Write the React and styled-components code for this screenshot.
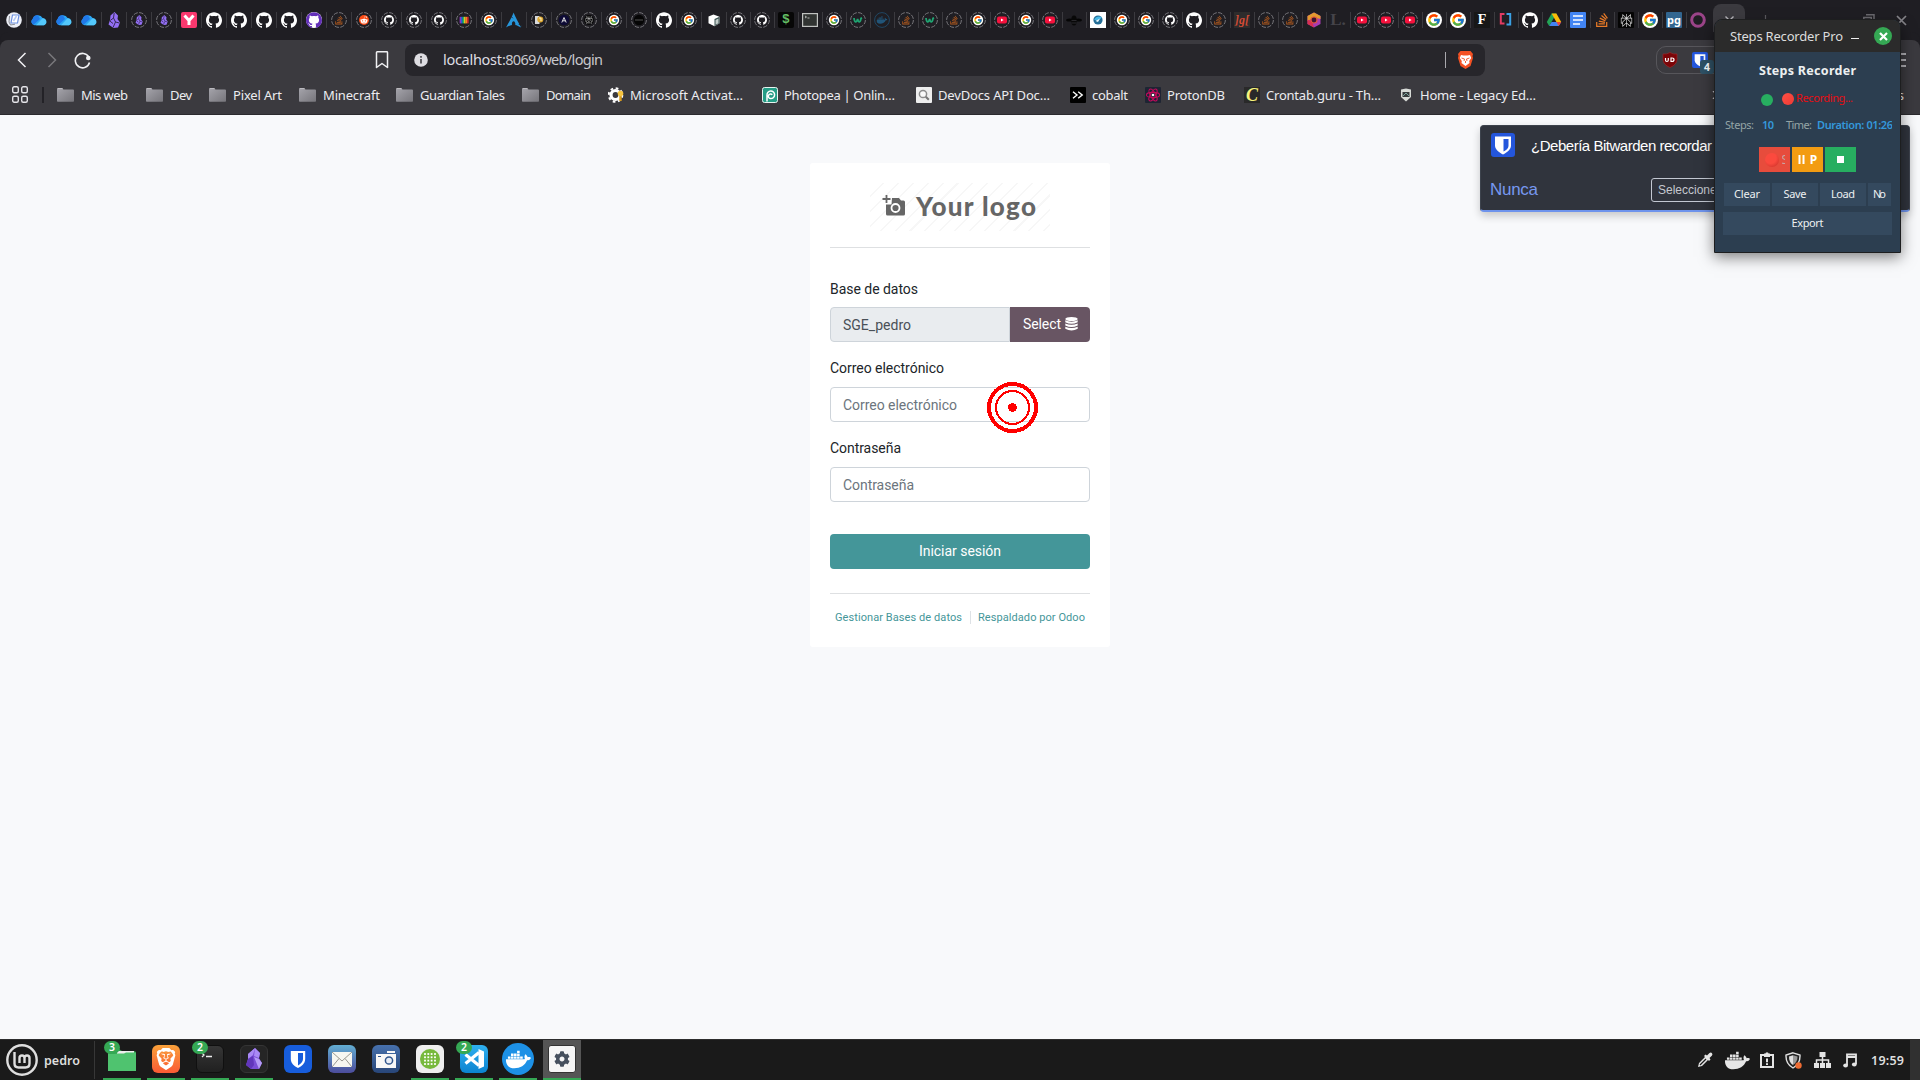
import React, { useLayoutEffect, useRef, useState } from "react";
import styled, { createGlobalStyle, css } from "styled-components";
import { SiBrave, SiGithub, SiArchlinux, SiPerplexity } from "react-icons/si";
import { FaStackOverflow, FaRedditAlien, FaDocker, FaCog } from "react-icons/fa";
import { FcGoogle } from "react-icons/fc";

const ui = `"Noto Sans", "Open Sans", sans-serif`;

const GlobalStyle = createGlobalStyle`
  * { box-sizing: border-box; }
  html, body { margin: 0; padding: 0; overflow: hidden; }
  svg { display: block; flex: none; }
`;

/* ---------- text whose tracking adapts to a column width ---------- */
const FitSpan = styled.span`
  display: block;
  flex: none;
  white-space: pre;
`;

function Fit({ w, children }) {
  const ref = useRef(null);
  const [tracking, setTracking] = useState(0);
  useLayoutEffect(() => {
    const range = document.createRange();
    range.selectNodeContents(ref.current);
    const natural = range.getBoundingClientRect().width;
    setTracking((w - natural) / (String(children).length - 1));
  }, [w, children]);
  return (
    <FitSpan ref={ref} style={{ width: w, letterSpacing: tracking }}>
      {children}
    </FitSpan>
  );
}

/* ---------- desktop ---------- */
const Desktop = styled.div`
  position: relative;
  display: flex;
  flex-direction: column;
  width: 1920px;
  height: 1080px;
  overflow: hidden;
  background: #f8f9fb;
  font-family: ${ui};
`;

/* ---------- tab strip ---------- */
const TabStrip = styled.div`
  display: flex;
  align-items: center;
  height: 40px;
  padding-left: 2px;
  background: #1f1e23;
`;

const Tab = styled.div`
  flex: none;
  width: ${(p) => (p.$wide ? 25 : 24)}px;
  height: 16px;
  padding-left: ${(p) => (p.$wide ? 4 : 3)}px;
  border-right: 1px solid ${(p) => (p.$last ? "transparent" : "#3b3a3f")};
`;

const TabIcon = styled.div`
  display: flex;
  align-items: center;
  justify-content: center;
  width: 16px;
  height: 16px;
  border-radius: ${(p) => p.$r || 0};
  background: ${(p) => p.$bg || "transparent"};
  color: ${(p) => p.$c || "#fff"};
  font: bold ${(p) => p.$fs || 10}px/16px ${(p) => p.$ff || ui};
`;

const ActiveTab = styled.div`
  flex: none;
  display: flex;
  align-items: center;
  justify-content: center;
  width: 32px;
  height: 36px;
  margin: 4px 0 0 2px;
  padding-bottom: 4px;
  border-radius: 8px;
  background: #3b3a3f;
`;

const WindowControls = styled.div`
  display: flex;
  align-items: center;
  margin-left: 15px;
  gap: 92px;
`;

const ControlPair = styled.div`
  display: flex;
  align-items: center;
  gap: 21px;
`;

const Ring = ({ children }) => (
  <svg width="16" height="16" viewBox="0 0 16 16">
    <circle cx="8" cy="8" r="7.4" fill="none" stroke="#77767b" strokeWidth="1" strokeDasharray="4.4 1.4" />
    {children}
  </svg>
);

const Sub = ({ icon: Icon, color, size = 10 }) => <Icon x={8 - size / 2} y={8 - size / 2} size={size} color={color} />;

const Cloud = () => (
  <svg width="16" height="16" viewBox="0 0 16 16">
    <path d="M3.5 13.2A3.5 3.5 0 0 1 2 6.8 5.2 5.2 0 0 1 11.6 6 4 4 0 0 1 13 13.2z" fill="#2aa6f4" />
    <path d="M5 13.2 11.6 6.2A3.6 3.6 0 0 1 13 13.2z" fill="#53c8fb" />
    <path d="M1.5 7.2A5 5 0 0 1 7 3.2L9 7 2.6 12.8A3.4 3.4 0 0 1 1.5 7.2z" fill="#2179e8" />
  </svg>
);

const ObsidianMark = ({ s = 16, o = 0 }) => (
  <g transform={`translate(${o} ${o}) scale(${s / 16})`}>
    <path d="M8.5 0 12 3.5 11.5 7 14 10.5 12 15.5 7.5 16 2.5 12.5 4 8 4.5 3.5z" fill="#9470f5" />
    <path d="M8.2 1 7.5 6 4.2 8.5M7.5 6 9.5 10 7 15.5M9.5 10 13.5 11M4 9.2 7 11.5" stroke="#2b2143" strokeWidth=".9" fill="none" />
  </g>
);

const Youtube = () => (
  <>
    <rect x="3" y="4.6" width="10" height="7" rx="2" fill="#f5123d" />
    <path d="M7 6.6 9.6 8.1 7 9.6z" fill="#fff" />
  </>
);

const Bars = () => (
  <>
    {["#8c2fc0", "#2767e8", "#1fbf58", "#f4d128", "#f28424", "#e02c2c"].map((c, i) => (
      <rect key={c} x={3.6 + i * 1.5} y="4.8" width="1.5" height="6.6" fill={c} />
    ))}
  </>
);

const glyphs = {
  doc: () => (
    <svg width="16" height="16" viewBox="0 0 16 16">
      <circle cx="8" cy="8" r="7.8" fill="#eceef5" />
      <path d="M6.5 3H13l-1.5 8H5z" fill="#fff" stroke="#6b8fe0" strokeWidth="1.2" />
      <path d="M3.5 4 3 10l1.5 3 4.5-.8" stroke="#70747e" fill="none" strokeWidth=".8" />
      <path d="m7.5 9 3-5" stroke="#b5c8f4" strokeWidth="1.5" />
    </svg>
  ),
  cloud: Cloud,
  obs: () => <svg width="16" height="16" viewBox="0 0 16 16"><ObsidianMark /></svg>,
  obsR: () => <Ring><ObsidianMark s={10} o={3} /></Ring>,
  y: () => (
    <TabIcon $bg="#f9386e" $r="2px">
      <svg width="16" height="16" viewBox="0 0 16 16"><path d="m3.5 3.5 4.5 5 4.5-5M8 8v5" stroke="#fff" strokeWidth="3" fill="none" /></svg>
    </TabIcon>
  ),
  gh: () => <SiGithub size={16} color="#fff" />,
  ghP: () => <TabIcon $bg="#fff" $r="8px"><SiGithub size={16} color="#6330b8" /></TabIcon>,
  ghR: () => <Ring><Sub icon={SiGithub} color="#fff" /></Ring>,
  so: () => <FaStackOverflow size={16} color="#e87a27" />,
  soR: () => <Ring><Sub icon={FaStackOverflow} color="#b75c1e" /></Ring>,
  red: () => <Ring><circle cx="8" cy="8" r="5" fill="#fb4b14" /><Sub icon={FaRedditAlien} color="#fff" size={8} /></Ring>,
  bars: () => <Ring><Bars /></Ring>,
  gR: () => <Ring><circle cx="8" cy="8" r="5.2" fill="#fff" /><Sub icon={FcGoogle} size={9} /></Ring>,
  g: () => <TabIcon $bg="#fff" $r="8px"><FcGoogle size={14} /></TabIcon>,
  arch: () => <SiArchlinux size={16} color="#2797dc" />,
  py: () => <Ring><path d="M4 4h4.5v8H4z" fill="#d8d9db" /><circle cx="9.3" cy="7.5" r="3" fill="#dba630" /><path d="M8 6h2v3" stroke="#fff4c7" fill="none" /></Ring>,
  a: () => <Ring><circle cx="8" cy="8" r="5.3" fill="#0e0b35" /><path d="m5.8 10.5 2.2-5 2.2 5M6.7 8.8h2.6" fill="none" stroke="#ddd" strokeWidth="1" /></Ring>,
  bot: () => <Ring><circle cx="8" cy="8" r="5" fill="#090909" /><Sub icon={SiPerplexity} color="#c6c6c6" size={8} /></Ring>,
  dark: () => <Ring><circle cx="8" cy="8" r="5.2" fill="#050505" /><path d="M4 8h8" stroke="#3d3d3d" strokeWidth="1.4" /></Ring>,
  cube: () => (
    <svg width="16" height="16" viewBox="0 0 16 16">
      <path d="m2.5 4.5 5-2 6 2.3v6.5l-5 3-6-3z" fill="#fff" />
      <path d="m8.5 7 5-2.2v6.5l-5 3z" fill="#39504f" />
      <path d="m9.5 8 3-1.5v4.8l-3 1.5z" fill="#c3ccca" />
    </svg>
  ),
  dollar: () => <TabIcon $bg="#070707" $r="2px" $c="#63bd64" $fs={13} $ff={`"Liberation Mono", monospace`}>$</TabIcon>,
  term: () => (
    <svg width="16" height="16" viewBox="0 0 16 16">
      <rect x=".6" y="1.6" width="14.8" height="12.8" fill="#303331" stroke="#bfc1bf" strokeWidth="1.2" />
      <path d="m3 4 1.5 1L3 6M5.5 6h2" stroke="#eee" strokeWidth=".7" fill="none" />
    </svg>
  ),
  w: () => <Ring><path d="M4 6c.5 4.8 2.4 5.2 3.6 1 .9 4 2.8 3.6 3.400-.6l1-.5" fill="none" stroke="#1fa572" strokeWidth="1.8" /></Ring>,
  dk: () => <svg width="16" height="16" viewBox="0 0 16 16"><circle cx="8" cy="8" r="7.4" stroke="#204763" fill="none" /><Sub icon={FaDocker} color="#215579" size={11} /></svg>,
  yt: () => <Ring><Youtube /></Ring>,
  bee: () => (
    <svg width="16" height="16" viewBox="0 0 16 16">
      <ellipse cx="3.5" cy="8" rx="3.4" ry="1.6" fill="#050505" />
      <ellipse cx="12.5" cy="8" rx="3.4" ry="1.6" fill="#050505" />
      <ellipse cx="8" cy="8.5" rx="2.8" ry="5" fill="#080808" />
      <path d="M5.5 8.5h5M5.5 11h5" stroke="#38373c" strokeWidth=".7" />
    </svg>
  ),
  tele: () => <TabIcon $bg="#fff"><svg width="16" height="16" viewBox="0 0 16 16"><circle cx="8" cy="8" r="4.6" fill="#246e97" /><path d="M4 7.5c2-3 5-3.8 8-2L7.8 9z" fill="#4ab9e6" /><path d="M5.5 9 10 6.5 8 10z" fill="#eef7fa" /></svg></TabIcon>,
  jgl: () => <TabIcon $bg="#2d2c2c" $c="#d44b35" $fs={12} $ff={`"Liberation Serif", serif`}><i>]g[</i></TabIcon>,
  hex: () => (
    <svg width="16" height="16" viewBox="0 0 16 16">
      <path d="M8 .5 14.5 4v8L8 15.5 1.5 12V4z" fill="#a83bb3" />
      <path d="M8 .5 14.5 4v3L8 5.5 1.5 9V4z" fill="#e39a2e" />
      <path d="M1.5 8 6 9l2 6.5L1.5 12z" fill="#d9304f" />
      <circle cx="8" cy="8" r="3" fill="#3b1734" stroke="#e1543c" strokeWidth="1.2" />
    </svg>
  ),
  l: () => <TabIcon $c="#45444a" $fs={17} $ff={`"Liberation Serif", serif`}>L.</TabIcon>,
  f: () => <TabIcon $bg="#171717" $fs={14} $ff={`"Liberation Serif", serif`}>F</TabIcon>,
  br: () => (
    <svg width="16" height="16" viewBox="0 0 16 16">
      <path d="M6.5 2H2.8v9.5h3.7" fill="none" stroke="#e33b63" strokeWidth="2" />
      <path d="M8.5 2h3.7v10.5H8.5" fill="none" stroke="#3aa0e4" strokeWidth="2" />
    </svg>
  ),
  drive: () => (
    <svg width="16" height="16" viewBox="0 0 16 16">
      <path d="M5.6 1.5h4.8L8 5.8 3.2 14 .8 10z" fill="#23a455" />
      <path d="M5.6 1.5h4.8L15.2 10h-4.8z" fill="#fbbc09" />
      <path d="M5.6 10h9.6l-2.4 4H3.2z" fill="#4384f3" />
      <path d="M10.4 10h4.8l-2.4 4z" fill="#e8483b" />
    </svg>
  ),
  docs: () => <TabIcon $bg="#4285f4" $r="1px"><svg width="16" height="16" viewBox="0 0 16 16"><path d="M3 4h10M3 8h10M3 12h7" stroke="#fff" strokeWidth="1.6" /></svg></TabIcon>,
  per: () => <TabIcon $bg="#050505" $r="1px"><SiPerplexity size={13} color="#e2e2e2" /></TabIcon>,
  pg: () => <TabIcon $bg="#326690" $r="1px" $fs={11}>pg</TabIcon>,
  odoo: () => <svg width="16" height="16" viewBox="0 0 16 16"><circle cx="8" cy="8" r="6.3" fill="none" stroke="#9b4489" strokeWidth="3" /></svg>,
};

const tabs = (
  "doc cloud cloud cloud obs obsR obsR y gh gh gh gh ghP soR red ghR ghR ghR bars gR arch py a bot gR dark gh gR cube " +
  "ghR ghR dollar term gR w dk soR w soR gR yt gR yt bee tele gR gR ghR gh soR jgl soR soR hex l yt yt yt g g f br gh drive docs so per g pg odoo"
).split(" ");

/* ---------- toolbar ---------- */
const Toolbar = styled.div`
  height: 75px;
  border-bottom: 1px solid #2b2a2e;
  border-radius: 8px 8px 0 0;
  background: #3b3a3f;
  box-shadow: 0 -8px 0 0 #1f1e23;
`;

const AddressRow = styled.div`
  display: flex;
  align-items: center;
  height: 40px;
`;

const NavButtons = styled.div`
  display: flex;
  align-items: center;
  width: 374px;
  padding-left: 14px;
  gap: 14px;
`;

const Omnibox = styled.div`
  display: flex;
  align-items: center;
  width: 1080px;
  height: 32px;
  margin-left: 15px;
  padding: 0 11px 0 9px;
  border-radius: 8px;
  background: #27262b;
  color: #c9c8cd;
  font-size: 14.5px;
`;

const Url = styled.div`
  display: flex;
  flex: 1;
  margin-left: 15px;
  padding-bottom: 2px;
`;

const Host = styled.div`
  color: #dfdee3;
`;

const Divider = styled.div`
  width: 1px;
  height: 16px;
  margin-right: 11px;
  background: #a9a8ad;
`;

const Extensions = styled.div`
  display: flex;
  align-items: center;
  width: 180px;
  height: 28px;
  margin-left: 171px;
  padding-left: 5px;
  gap: 14px;
  border: 1px solid #57565b;
  border-radius: 10px;
`;

const ExtensionSlot = styled.div`
  position: relative;
`;

const ExtensionCount = styled.div`
  position: absolute;
  left: 8px;
  top: 8px;
  width: 14px;
  height: 14px;
  border-radius: 3px;
  background: #2f5266;
  color: #fff;
  font: bold 10.5px/14px ${ui};
  text-align: center;
`;

const MenuButton = styled.div`
  margin-left: 50px;
`;

const BookmarkRow = styled.div`
  display: flex;
  align-items: center;
  height: 34px;
  padding: 0 15px 5px 12px;
  color: #ececf0;
  font-size: 13px;
`;

const RowRule = styled.div`
  width: 2px;
  height: 16px;
  margin: 0 13px 0 14px;
  background: #232227;
`;

const Bookmark = styled.div`
  display: flex;
  flex: none;
  align-items: center;
  width: ${(p) => p.$w}px;
  gap: ${(p) => (p.$folder ? 7 : 6)}px;
`;

const Overflow = styled.div`
  display: flex;
  flex: 1;
  justify-content: space-between;
  align-items: center;
  padding: 0 1px 0 174px;
`;

const Folder = () => (
  <svg width="17" height="14" viewBox="0 0 17 14">
    <defs><linearGradient id="fold" x2="1" y2="1"><stop stopColor="#a5a4ab" /><stop offset="1" stopColor="#76757b" /></linearGradient></defs>
    <path d="M0 1.5Q0 .3 1.2.3H5l1.6 1.2H16q1 0 1 1V13q0 .8-.8.8H.8Q0 13.8 0 13z" fill="url(#fold)" />
    <path d="M.5.5h5.2" stroke="#d1d0d4" strokeWidth=".7" />
  </svg>
);

const bookmarkIcons = {
  gear: <svg width="16" height="16" viewBox="0 0 16 16"><circle cx="7.5" cy="8" r="4.5" fill="none" stroke="#fff" strokeWidth="3.2" /><circle cx="7.5" cy="8" r="6.8" fill="none" stroke="#fff" strokeWidth="2" strokeDasharray="2.7 2.64" /><path d="M12.5 5v9" stroke="#d99b1c" strokeWidth="2.4" /><circle cx="12.5" cy="6.5" r="2.8" fill="#f6c440" /></svg>,
  pea: <svg width="16" height="16" viewBox="0 0 16 16"><rect x=".5" y=".5" width="15" height="15" rx="2" fill="#259d86" stroke="#e8f4f1" /><path d="M5 14.5V8a3.8 3.8 0 1 1 3.8 3.6 2.3 2.3 0 1 1 1.5-3.9" fill="none" stroke="#fff" strokeWidth="1.5" /></svg>,
  dev: <svg width="16" height="16" viewBox="0 0 16 16"><rect width="16" height="16" rx="1" fill="#eee" /><circle cx="7" cy="7" r="3.6" fill="#fafafa" stroke="#8c8c8c" strokeWidth="1.5" /><path d="m9.8 9.8 3 3" stroke="#777" strokeWidth="2" /></svg>,
  cob: <svg width="16" height="16" viewBox="0 0 16 16"><rect width="16" height="16" rx="1" fill="#000" /><path d="m3 4.8 4 3.2-4 3.2M8.2 4.8l4 3.2-4 3.2" fill="none" stroke="#fff" strokeWidth="1.4" /></svg>,
  pro: <svg width="16" height="16" viewBox="0 0 16 16"><rect width="16" height="16" rx="1" fill="#1e2433" /><g fill="none" stroke="#c40a5c" strokeWidth="1.1"><ellipse cx="8" cy="8" rx="6.6" ry="2.6" /><ellipse cx="8" cy="8" rx="6.6" ry="2.6" transform="rotate(60 8 8)" /><ellipse cx="8" cy="8" rx="6.6" ry="2.6" transform="rotate(120 8 8)" /></g><circle cx="8" cy="8" r="1.3" fill="#fff" /></svg>,
  cron: <TabIcon $bg="#292929" $c="#f7f37b" $fs={18} $ff={`"Liberation Serif", serif`}><i>C</i></TabIcon>,
  home: <svg width="16" height="16" viewBox="0 0 16 16"><path d="M3 2.5 8 1.5l5 1V10l-5 4.5L3 10z" fill="#d7dad7" /><path d="M4.5 5h7v5h-7z" fill="#363b3d" /><path d="m5 9 3-3 3 3" stroke="#7ba19b" fill="none" /></svg>,
};

const bookmarks = [
  ["folder", "Mis web", 89, 47],
  ["folder", "Dev", 63, 22],
  ["folder", "Pixel Art", 90, 49],
  ["folder", "Minecraft", 97, 57],
  ["folder", "Guardian Tales", 126, 85],
  ["folder", "Domain", 86, 45],
  ["gear", "Microsoft Activat…", 154, 113],
  ["pea", "Photopea | Onlin…", 154, 111],
  ["dev", "DevDocs API Doc…", 154, 112],
  ["cob", "cobalt", 75, 36],
  ["pro", "ProtonDB", 99, 58],
  ["cron", "Crontab.guru - Th…", 154, 115],
  ["home", "Home - Legacy Ed…", 140, 116],
];

/* ---------- login page ---------- */
const Page = styled.main`
  display: flex;
  flex: 1;
  justify-content: center;
  align-items: flex-start;
  padding-top: 48px;
  background: #f8f9fb;
  font-family: Roboto, sans-serif;
`;

const Card = styled.section`
  display: flex;
  flex-direction: column;
  width: 300px;
  height: 484px;
  padding: 20px 20px 0;
  border-radius: 3px;
  background: #fff;
  color: #212529;
  font-size: 14px;
  line-height: 21px;
`;

const Logo = styled.div`
  display: flex;
  align-items: center;
  align-self: center;
  width: 180px;
  height: 48px;
  padding: 0 0 2px 12px;
  gap: 10px;
  background: repeating-linear-gradient(135deg, #fff 0 9px, #f7f7f7 9px 10.5px);
  color: #666;
  font: 900 26px/44px Lato, sans-serif;
`;

const Rule = styled.hr`
  flex: none;
  width: 100%;
  height: 1px;
  margin: ${(p) => p.$m};
  border: 0;
  background: #dee0e2;
`;

const Field = styled.div`
  display: flex;
  flex: none;
  flex-direction: column;
  gap: ${(p) => (p.$first ? 7 : 8)}px;
  height: ${(p) => (p.$first ? 79 : 80)}px;
`;

const Group = styled.div`
  display: flex;
  height: 35px;
`;

const Input = styled.div`
  flex: ${(p) => (p.$grouped ? "1" : "none")};
  height: 35px;
  padding: 7px 12px 0;
  border: 1px solid #ced4da;
  border-radius: ${(p) => (p.$grouped ? "4px 0 0 4px" : "4px")};
  background: ${(p) => (p.$grouped ? "#e9ecef" : "#fff")};
  color: ${(p) => (p.$grouped ? "#495057" : "#6c757d")};
`;

const SelectButton = styled.div`
  display: flex;
  align-items: center;
  width: 80px;
  padding: 0 0 1px 13px;
  gap: 4px;
  border-radius: 0 4px 4px 0;
  background: #685563;
  color: #fff;
`;

const DatabaseIcon = () => (
  <svg width="13" height="14" viewBox="0 0 13 14">
    <ellipse cx="6.5" cy="2" rx="6.2" ry="2" fill="#fff" />
    <path d="M.3 3.3q6.200 2.700 12.400 0v1.900q-6.200 3-12.400 0zM.3 6.500q6.200 2.700 12.400 0v1.900q-6.200 3-12.400 0zM.3 9.700q6.200 2.700 12.400 0v2.100q-6.200 3.600-12.400 0z" fill="#fff" />
  </svg>
);

const SubmitButton = styled.div`
  display: flex;
  flex: none;
  justify-content: center;
  height: 35px;
  margin-top: 16px;
  padding-top: 7px;
  border-radius: 4px;
  background: #449699;
  color: #fff;
`;

const Links = styled.div`
  display: flex;
  flex: none;
  padding-left: 5px;
  align-items: center;
  height: 14px;
  color: #449699;
  font-size: 11px;
`;

const LinkRule = styled.div`
  width: 1px;
  height: 13px;
  margin: 0 7px 0 8px;
  background: #dee2e6;
`;

const ClickMark = styled.div`
  position: absolute;
  left: 987px;
  top: 382px;
`;

/* ---------- password bar ---------- */
const Notice = styled.aside`
  position: absolute;
  left: 1480px;
  top: 125px;
  display: flex;
  flex-direction: column;
  width: 430px;
  height: 87px;
  border: 1px solid #3d434d;
  border-bottom: 2px solid #6e93ec;
  border-radius: 4px;
  background: #30343d;
  color: #fff;
  box-shadow: 0 4px 8px rgba(0, 0, 0, 0.2);
  font-family: "Liberation Sans", Arial, sans-serif;
`;

const NoticeHead = styled.div`
  display: flex;
  align-items: center;
  height: 40px;
  padding-left: 10px;
  gap: 16px;
  font-size: 15px;
`;

const NoticeActions = styled.div`
  display: flex;
  align-items: center;
  height: 48px;
  padding: 6px 0 0 9px;
  color: #7798f0;
  font-size: 17px;
`;

const FolderSelect = styled.div`
  width: 150px;
  height: 24px;
  margin-left: 113px;
  padding-left: 6px;
  border: 1px solid #c3c8d2;
  border-radius: 3px;
  color: #c5c8cf;
  font-size: 12px;
  line-height: 23px;
`;

const BwTile = ({ size }) => (
  <svg width={size} height={size} viewBox="0 0 24 24">
    <rect width="24" height="24" rx="3" fill="#2456dc" />
    <path d="M4 3.5h16v9c0 4-4 7-8 9-4-2-8-5-8-9z" fill="#fff" />
    <path d="M12.5 6h5v7c0 2.300-2.500 4.200-5 5.600z" fill="#2456dc" />
  </svg>
);

/* ---------- recorder window ---------- */
const Recorder = styled.div`
  position: absolute;
  left: 1714px;
  top: 19px;
  display: flex;
  flex-direction: column;
  width: 187px;
  height: 234px;
  overflow: hidden;
  border: 1px solid #1d1e1f;
  border-radius: 8px 8px 0 0;
  background: #2c3e50;
`;

const RecorderShadow = styled.div`
  position: absolute;
  left: 1714px;
  top: 24px;
  width: 187px;
  height: 229px;
  box-shadow: 0 4px 14px rgba(0, 0, 0, 0.5);
`;

const TitleBar = styled.div`
  display: flex;
  align-items: center;
  height: 32px;
  padding-left: 15px;
  background: #2b2b2b;
  color: #dcdcdc;
  font-size: 13px;
`;

const Minimize = styled.div`
  width: 8px;
  height: 1px;
  margin: 4px 15px 0 8px;
  background: #eee;
`;

const Close = styled.div`
  display: flex;
  align-items: center;
  justify-content: center;
  width: 18px;
  height: 18px;
  border-radius: 50%;
  background: #35a854;
`;

const Heading = styled.div`
  display: flex;
  justify-content: center;
  height: 38px;
  color: #ecf0f1;
  font: bold 12.5px/38px ${ui};
`;

const StatusRow = styled.div`
  display: flex;
  align-items: center;
  height: 18px;
  padding-left: 46px;
  color: #e60d12;
  font-size: 11px;
  line-height: 16px;
`;

const StatusText = styled.div`
  padding-bottom: 2px;
`;

const Dot = styled.div`
  flex: none;
  width: ${(p) => p.$s || 12}px;
  height: ${(p) => p.$s || 12}px;
  margin: ${(p) => p.$m};
  border-radius: 50%;
  background: ${(p) => p.$c};
`;

const StatsRow = styled.div`
  display: flex;
  align-items: center;
  width: 177px;
  height: 36px;
  overflow: hidden;
  padding: 0 0 4px 10px;
  color: #95a5a6;
  font-size: 11px;
`;

const Stat = styled.div`
  margin: ${(p) => p.$m};
  color: #3498db;
  font-weight: 600;
`;

const ControlRow = styled.div`
  display: flex;
  justify-content: center;
  height: 25px;
  margin-top: 3px;
  gap: 2px;
`;

const Control = styled.div`
  display: flex;
  align-items: center;
  justify-content: center;
  width: 31px;
  gap: 5px;
  overflow: hidden;
  background: ${(p) => p.$c};
  color: #fff;
  font: bold 12px/25px ${ui};
`;

const Ghost = styled.span`
  width: 3px;
  overflow: hidden;
  color: #c5a49f;
  font-weight: 400;
`;

const FileRow = styled.div`
  display: flex;
  gap: 2px;
  padding: 11px 9px 0;
`;

const FlatButton = styled.div`
  display: flex;
  justify-content: center;
  width: ${(p) => p.$w}px;
  height: 23px;
  overflow: hidden;
  background: #34495e;
  color: #ecf0f1;
  font-size: 11px;
  line-height: 22px;
`;

const ExportRow = styled.div`
  padding: 6px 8px;
`;

/* ---------- taskbar ---------- */
const Taskbar = styled.footer`
  display: flex;
  align-items: center;
  height: 41px;
  border-top: 1px solid #2d2d2d;
  background: #1a1a1a;
  color: #dedede;
  font-size: 12.5px;
  font-weight: 600;
`;

const Start = styled.div`
  display: flex;
  align-items: center;
  width: 95px;
  height: 38px;
  padding-left: 6px;
  gap: 6px;
  border-right: 1px solid #373737;
`;

const Apps = styled.div`
  display: flex;
  flex: 1;
  gap: 6px;
  padding-left: 8px;
`;

const TaskButton = styled.div`
  position: relative;
  display: flex;
  justify-content: center;
  align-items: center;
  width: 38px;
  height: 40px;
  padding-bottom: 2px;
  background: ${(p) => (p.$active ? "#555" : "transparent")};
  ${(p) => p.$open && css`border-bottom: 2px solid #35a854; padding-bottom: 0;`}
`;

const Tile = styled.div`
  display: flex;
  align-items: center;
  justify-content: center;
  width: ${(p) => p.$s || 28}px;
  height: ${(p) => p.$s || 28}px;
  border-radius: ${(p) => p.$r || "6px"};
  border: ${(p) => p.$b || "0"};
  background: ${(p) => p.$bg};
  color: #fff;
`;

const Badge = styled.div`
  position: absolute;
  left: 1px;
  top: 1px;
  width: 16px;
  height: 13px;
  border-radius: 7px;
  background: #35a854;
  color: #fff;
  font: 600 10.5px/13px ${ui};
  text-align: center;
`;

const Tray = styled.div`
  display: flex;
  align-items: center;
  height: 40px;
`;

const TrayIcon = styled.div`
  display: flex;
  justify-content: center;
  width: ${(p) => p.$w}px;
`;

const Clock = styled.div`
  margin: 0 6px 0 8px;
`;

const ShowDesktop = styled.div`
  width: 10px;
  height: 40px;
  background: #303030;
`;

const dots = [6, 9.3, 12.6, 16];

const apps = [
  { open: 1, badge: 3, el: <svg width="28" height="24" viewBox="0 0 28 24"><path d="M0 4q0-2 2-2h9l3 2h12q2 0 2 2v16q0 1.5-1.5 1.5h-25Q0 23.5 0 22z" fill="#2e9a4b" /><path d="M9 4h17v3H9z" fill="#eee" /><path d="M0 6.5h16l2-1h10V24H0z" fill="#4fc36f" /></svg> },
  { open: 1, el: <Tile $bg="linear-gradient(#f9a13a, #fb5a34)"><SiBrave size={22} /></Tile> },
  { open: 1, badge: 2, el: <Tile $bg="linear-gradient(#363636, #202020)" $b="1px solid #101010"><svg width="26" height="26" viewBox="0 0 26 26"><path d="m5 7 2 2-2 2M9 10.5h6" stroke="#eee" strokeWidth="1.3" fill="none" /></svg></Tile> },
  { open: 1, el: <Tile $bg="#252525" $b="1px solid #343434"><svg width="18" height="22" viewBox="0 0 18 22"><path d="m10 0 5 5-1 5 3 5-3 6-8 0-5-4 2-6 0-5z" fill="#7b4fd6" /><path d="m10 0-2 7-5 4V6zM15 5l-1 5-5-2 1-8z" fill="#a98af4" /><path d="m3 11 5-3 1 9-3 4-5-4z" fill="#6136bb" /><path d="m9 9 5 2 3 4-3 6z" fill="#b59bf6" /></svg></Tile> },
  { el: <Tile $bg="#175ddc"><svg width="16" height="19" viewBox="0 0 16 19"><path d="M.8 1h14.4v8c0 4.5-3.5 7-7.2 9C4.3 16 .8 13.5.8 9z" fill="#fff" /><path d="M8 3h5v6c0 3-2.5 5-5 6.4z" fill="#175ddc" /></svg></Tile> },
  { el: <Tile $bg="linear-gradient(#62aed2, #4c4c9c)"><svg width="20" height="15" viewBox="0 0 20 15"><rect width="20" height="15" rx="1" fill="#f8f7f1" /><path d="m0 0 10 9 10-9M0 15l7-8.5M20 15l-7-8.5" fill="none" stroke="#9a9991" strokeWidth="1" /></svg></Tile> },
  { el: <Tile $bg="linear-gradient(#4771ad, #284678)"><svg width="20" height="17" viewBox="0 0 20 17"><path d="M11 0h8v2h-8zM0 3h20v14H0z" fill="#f7f7f7" /><circle cx="13" cy="9.5" r="3.6" fill="#e7edf6" stroke="#30558d" strokeWidth="1.5" /><path d="M2 5.5h3" stroke="#30558d" /></svg></Tile> },
  { open: 1, el: <Tile $bg="#eee"><svg width="22" height="22" viewBox="0 0 22 22"><circle cx="11" cy="11" r="10" fill="#77b93c" />{dots.map((y) => dots.map((x) => <rect key={`${x}-${y}`} x={x - 0.9} y={y - 0.9} width="1.8" height="1.8" fill="#fff" />))}</svg></Tile> },
  { open: 1, badge: 2, el: <Tile $bg="linear-gradient(#2fb0f0, #0b83d0)"><svg width="22" height="22" viewBox="0 0 22 22"><path d="M15.500 1 21 3.500v15L15.500 21z" fill="#fff" /><path d="M16 4.500 2.500 15.500M16 17.500 2.500 6.500" stroke="#fff" strokeWidth="3.2" fill="none" /></svg></Tile> },
  { open: 1, el: <Tile $bg="#1d91e6" $s={32} $r="50%"><FaDocker size={25} /></Tile> },
  { open: 1, active: 1, el: <Tile $bg="#f6f6f6" $r="3px" $b="1px solid #333"><FaCog size={16} color="#46505e" /></Tile> },
];

const trayIcons = [
  [28, <svg width="16" height="16" viewBox="0 0 16 16"><path d="M1 15l1-4 6-6-1-1 1.5-1.5 1.5 1L12.5 1q1.5-1 2.5.2t-.2 2.6L12.5 6l1 1.5L12 9l-1-1-6 6z" fill="#e4e4e4" /><path d="m3 13 6-6" stroke="#1a1a1a" strokeWidth="1.3" /></svg>],
  [36, <FaDocker size={25} color="#e6e6e6" />],
  [23, <svg width="14" height="16" viewBox="0 0 14 16"><path d="M1 3h12v12H1z" fill="none" stroke="#e4e4e4" strokeWidth="2" /><path d="M4 1.5h6V5H4z" fill="#e4e4e4" /><circle cx="7" cy="1.8" r="1.6" fill="#e4e4e4" /><path d="M7 6.5v3.7M7 11.2V13" stroke="#e4e4e4" strokeWidth="2" /></svg>],
  [30, <svg width="17" height="17" viewBox="0 0 17 17"><path d="M8 .8 15 3c.3 6-1.5 10-7 13C2.5 13 .7 9 1 3z" fill="#222" stroke="#e0e0e0" strokeWidth="1.4" /><path d="M8 3.2 4 4.5c0 4 1 6.5 4 8.5z" fill="#e0e0e0" /><path d="m8 3.2 4.5 1.3C12.5 8.5 11 11 8 13z" fill="#999" /><circle cx="13.5" cy="13.5" r="3.2" fill="#ef6c33" /></svg>],
  [29, <svg width="17" height="16" viewBox="0 0 17 16"><path d="M5.5 0h6v5h-6zM0 11h5v5H0zM6 11h5v5H6zM12 11h5v5h-5z" fill="#e4e4e4" /><path d="M8.5 5v6M2.5 11V8h12v3" fill="none" stroke="#e4e4e4" strokeWidth="1.5" /></svg>],
  [26, <svg width="14" height="15" viewBox="0 0 14 15"><path d="M4 12V1.5h9V11M4 4h9" fill="none" stroke="#e4e4e4" strokeWidth="1.8" /><ellipse cx="2.6" cy="12.4" rx="2.4" ry="2" fill="#e4e4e4" /><ellipse cx="11.3" cy="11.5" rx="2.4" ry="2" fill="#e4e4e4" /></svg>],
];

export default function App() {
  return (
    <Desktop>
      <GlobalStyle />
      <TabStrip>
        {tabs.map((name, i) => {
          const Glyph = glyphs[name];
          return (
            <Tab key={i} $wide={i < 29} $last={i === tabs.length - 1}>
              <Glyph />
            </Tab>
          );
        })}
        <ActiveTab>
          <svg width="9" height="9" viewBox="0 0 9 9"><path d="m.5.5 8 8m0-8-8 8" stroke="#b7b6bb" strokeWidth="1.4" /></svg>
        </ActiveTab>
        <WindowControls>
          <svg width="11" height="11" viewBox="0 0 11 11"><path d="M5.5 0v11M0 5.5h11" stroke="#59585d" strokeWidth="1.2" /></svg>
          <ControlPair>
            <svg width="12" height="12" viewBox="0 0 12 12"><path d="M3 .8h8v8M.8 3.5h7.5V11H.8z" fill="none" stroke="#68676c" strokeWidth="1.5" /></svg>
            <svg width="11" height="11" viewBox="0 0 11 11"><path d="m1 1 9 9m0-9-9 9" stroke="#858489" strokeWidth="1.7" /></svg>
          </ControlPair>
        </WindowControls>
      </TabStrip>

      <Toolbar>
        <AddressRow>
          <NavButtons>
            <svg width="16" height="16" viewBox="0 0 16 16"><path d="m11.5 1-7 7 7 7" fill="none" stroke="#f1f1f4" strokeWidth="1.5" /></svg>
            <svg width="16" height="16" viewBox="0 0 16 16"><path d="m4.5 1 7 7-7 7" fill="none" stroke="#78777c" strokeWidth="1.5" /></svg>
            <svg width="17" height="17" viewBox="0 0 17 17"><path d="M15.500 10.500A7.200 7.200 0 1 1 14.800 5" fill="none" stroke="#f1f1f4" strokeWidth="1.6" /><circle cx="14.3" cy="6" r="2.3" fill="#f1f1f4" /></svg>
          </NavButtons>
          <svg width="16" height="18" viewBox="0 0 16 18"><path d="M2.5 1.5q0-.7.7-.7h9.6q.7 0 .7.7v15L8 12.5l-5.500 4z" fill="none" stroke="#f1f1f4" strokeWidth="1.5" strokeLinejoin="round" /></svg>
          <Omnibox>
            <svg width="14" height="14" viewBox="0 0 14 14"><circle cx="7" cy="7" r="6.8" fill="#dedde2" /><path d="M7 6v4.6M7 3v1.7" stroke="#4a494e" strokeWidth="1.7" /></svg>
            <Url>
              <Host><Fit w={59}>localhost</Fit></Host>
              <Fit w={101}>:8069/web/login</Fit>
            </Url>
            <Divider />
            <svg width="17" height="18" viewBox="0 0 17 18"><path d="M3.5 0h10L16 3l-.5 2 .5 2-2.500 8-5 3-5-3L1 7l.5-2L1 3z" fill="#f45123" /><path d="m4 4 2.5.5h4L13 4l1.2 3-2 3 .3 2-4 3-4-3 .3-2-2-3z" fill="#fff" /><path d="m4.500 7 3 1-.5 2m5.500-3-3 1 .5 2M8.500 10v2" stroke="#f45123" fill="none" strokeWidth=".9" /></svg>
          </Omnibox>
          <Extensions>
            <svg width="16" height="16" viewBox="0 0 16 16"><path d="M8 .5q3 2 7 1.5v5.5q0 5-7 8-7-3-7-8V2q4 .5 7-1.500z" fill="#7b0508" stroke="#a22a2c" strokeWidth=".6" /><path d="M3.500 6v2q0 1.500 1.400 1.500T6.300 8V6M9 6v3.500h1q2 0 2-1.750T10 6z" fill="none" stroke="#fff" strokeWidth="1.2" /></svg>
            <ExtensionSlot>
              <BwTile size={16} />
              <ExtensionCount>4</ExtensionCount>
            </ExtensionSlot>
          </Extensions>
          <MenuButton>
            <svg width="20" height="14" viewBox="0 0 20 14"><path d="M0 1h20M0 7h20M0 13h20" stroke="#d6d5da" strokeWidth="1.6" /></svg>
          </MenuButton>
        </AddressRow>
        <BookmarkRow>
          <svg width="16" height="17" viewBox="0 0 16 17">
            <g fill="none" stroke="#e4e3e8" strokeWidth="1.4"><rect x=".7" y=".7" width="5.6" height="6" rx="1.5" /><rect x="9.7" y=".7" width="5.6" height="6" rx="1.5" /><rect x=".7" y="10.2" width="5.6" height="6" rx="1.5" /><rect x="9.7" y="10.2" width="5.6" height="6" rx="1.5" /></g>
          </svg>
          <RowRule />
          {bookmarks.map(([icon, label, width, text]) => (
            <Bookmark key={label} $w={width} $folder={icon === "folder"}>
              {icon === "folder" ? <Folder /> : bookmarkIcons[icon]}
              <Fit w={text}>{label}</Fit>
            </Bookmark>
          ))}
          <Overflow>
            <svg width="10" height="8" viewBox="0 0 10 8"><path d="m1 0 4 4-4 4M5 0l4 4-4 4" fill="none" stroke="#c9c8cd" strokeWidth="1.3" /></svg>
            <span>s</span>
          </Overflow>
        </BookmarkRow>
      </Toolbar>

      <Page>
        <Card>
          <Logo>
            <svg width="24" height="22" viewBox="0 0 24 22">
              <path d="M4.5 0v8M.5 4h8" stroke="#666" strokeWidth="1.8" />
              <path d="M10 3h7l2 2.5h2.5Q23 5.500 23 7v12q0 1.500-1.500 1.500h-16Q4 20.500 4 19V9.500h5.500z" fill="#666" />
              <circle cx="13.5" cy="13" r="4" fill="#666" stroke="#fff" strokeWidth="1.8" />
            </svg>
            <Fit w={120}>Your logo</Fit>
          </Logo>
          <Rule $m="16px 0 31px" />
          <Field $first>
            <Fit w={88}>Base de datos</Fit>
            <Group>
              <Input $grouped><Fit w={68}>SGE_pedro</Fit></Input>
              <SelectButton>
                <Fit w={38}>Select</Fit>
                <DatabaseIcon />
              </SelectButton>
            </Group>
          </Field>
          <Field>
            <Fit w={114}>Correo electrónico</Fit>
            <Input><Fit w={114}>Correo electrónico</Fit></Input>
          </Field>
          <Field>
            <Fit w={71}>Contraseña</Fit>
            <Input><Fit w={71}>Contraseña</Fit></Input>
          </Field>
          <SubmitButton><Fit w={82}>Iniciar sesión</Fit></SubmitButton>
          <Rule $m="24px 0 16px" />
          <Links>
            <Fit w={127}>Gestionar Bases de datos</Fit>
            <LinkRule />
            <Fit w={107}>Respaldado por Odoo</Fit>
          </Links>
        </Card>
      </Page>

      <Taskbar>
        <Start>
          <svg width="32" height="32" viewBox="0 0 32 32">
            <circle cx="16" cy="16" r="14.7" fill="none" stroke="#dedede" strokeWidth="2.4" />
            <path d="M8.5 8v11.5q0 4 4 4h7q4 0 4-4V14q0-2.500-2.500-2.500T18.500 14v5M18.500 14q0-2.500-2.500-2.500T13.500 14v5" fill="none" stroke="#dedede" strokeWidth="2.4" />
          </svg>
          <Fit w={36}>pedro</Fit>
        </Start>
        <Apps>
          {apps.map((app, i) => (
            <TaskButton key={i} $open={app.open} $active={app.active}>
              {app.el}
              {app.badge && <Badge>{app.badge}</Badge>}
            </TaskButton>
          ))}
        </Apps>
        <Tray>
          {trayIcons.map(([w, icon], i) => <TrayIcon key={i} $w={w}>{icon}</TrayIcon>)}
          <Clock><Fit w={33}>19:59</Fit></Clock>
        </Tray>
        <ShowDesktop />
      </Taskbar>

      <Notice>
        <NoticeHead>
          <BwTile size={24} />
          <Fit w={181}>¿Debería Bitwarden recordar</Fit>
        </NoticeHead>
        <NoticeActions>
          <Fit w={48}>Nunca</Fit>
          <FolderSelect>Seleccione</FolderSelect>
        </NoticeActions>
      </Notice>

      <RecorderShadow />
      <Recorder>
        <TitleBar>
          <Fit w={113}>Steps Recorder Pro</Fit>
          <Minimize />
          <Close>
            <svg width="9" height="9" viewBox="0 0 9 9"><path d="m1 1 7 7m0-7-7 7" stroke="#fff" strokeWidth="2.2" /></svg>
          </Close>
        </TitleBar>
        <Heading><Fit w={97}>Steps Recorder</Fit></Heading>
        <StatusRow>
          <Dot $c="#27ae60" $m="2px 9px 0 0" />
          <Dot $c="linear-gradient(135deg, #ff5044, #ee3a35)" $m="0 2px 0 0" />
          <StatusText><Fit w={57}>Recording...</Fit></StatusText>
        </StatusRow>
        <StatsRow>
          <Fit w={29}>Steps:</Fit>
          <Stat $m="0 12px 0 8px"><Fit w={12}>10</Fit></Stat>
          <Fit w={26}>Time:</Fit>
          <Stat $m="0 0 0 5px"><Fit w={76}>Duration: 01:26</Fit></Stat>
        </StatsRow>
        <ControlRow>
          <Control $c="#e74c3c"><Dot $s={14} $c="radial-gradient(circle at 40% 35%, #fb4a3e 45%, #dc3a30 75%)" $m="0 -2px 0 0" /><Ghost>S</Ghost></Control>
          <Control $c="#f39c12">
            <svg width="7" height="9" viewBox="0 0 7 9"><path d="M1.5 0v9M5.5 0v9" stroke="#fff" strokeWidth="2" /></svg>P
          </Control>
          <Control $c="#27ae60">
            <svg width="7" height="7"><rect width="7" height="7" fill="#fff" /></svg>
          </Control>
        </ControlRow>
        <FileRow>
          <FlatButton $w={46}><Fit w={26}>Clear</Fit></FlatButton>
          <FlatButton $w={46}><Fit w={23}>Save</Fit></FlatButton>
          <FlatButton $w={46}><Fit w={24}>Load</Fit></FlatButton>
          <FlatButton $w={23}><Fit w={13}>No</Fit></FlatButton>
        </FileRow>
        <ExportRow>
          <FlatButton $w={169}><Fit w={32}>Export</Fit></FlatButton>
        </ExportRow>
      </Recorder>

      <ClickMark>
        <svg width="51" height="51" viewBox="0 0 51 51" shapeRendering="crispEdges">
          <circle cx="25.5" cy="25.5" r="23.5" fill="none" stroke="red" strokeWidth="4" />
          <circle cx="25.5" cy="25.5" r="16.5" fill="none" stroke="red" strokeWidth="2" />
          <circle cx="25.5" cy="25.5" r="4.5" fill="red" />
        </svg>
      </ClickMark>
    </Desktop>
  );
}
